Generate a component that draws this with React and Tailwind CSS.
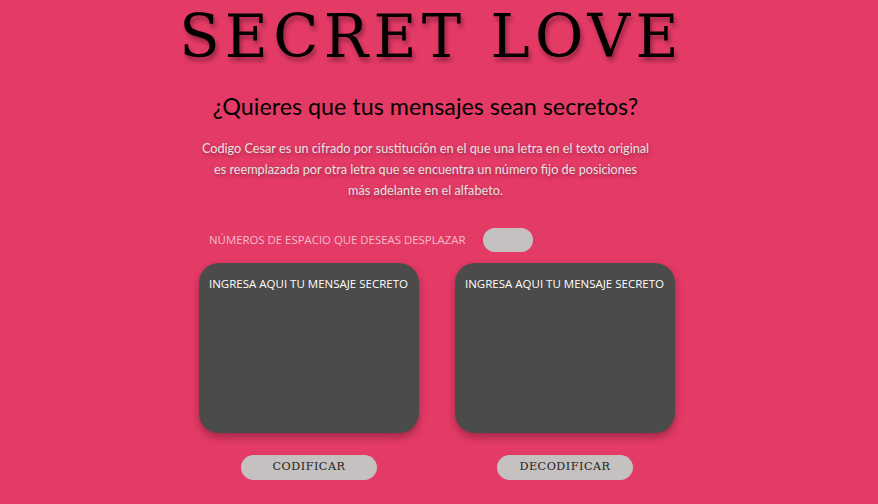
export default function App() {
    return (
        <div className="min-h-[504px] w-full bg-[#e43a66] overflow-hidden">
            <div className="flex flex-col items-center pr-[27px]">
                <h1 className="mt-[4px] text-[59px] leading-[66px] tracking-[5.3px] text-black [font-family:'DejaVu_Serif',serif] [text-shadow:2px_4px_4px_rgba(0,0,0,0.35)] pl-[12px]">
                    SECRET LOVE
                </h1>
                <h2 className="mt-[20px] text-[23.3px] leading-[32px] text-black [font-family:Lato,sans-serif]">
                    ¿Quieres que tus mensajes sean secretos?
                </h2>
                <p className="mt-[16px] text-center text-[12.7px] leading-[21px] text-[#e6e2e3] [font-family:Lato,sans-serif] [text-shadow:1px_2px_4px_rgba(0,0,0,0.35)]">
                    Codigo Cesar es un cifrado por sustitución en el que una letra en el texto original<br />
                    es reemplazada por otra letra que se encuentra un número fijo de posiciones<br />
                    más adelante en el alfabeto.
                </p>
            </div>
            <div className="ml-[199px] w-[476px]">
                <div className="mt-[27px] flex items-center pl-[10px] h-[24px]">
                    <span className="text-[11.4px] text-[#f3bccb] [font-family:'Open_Sans',sans-serif]">NÚMEROS DE ESPACIO QUE DESEAS DESPLAZAR</span>
                    <input type="number" className="ml-[17px] h-[24px] w-[50px] rounded-full bg-[#c4c1c0] outline-none border-0" />
                </div>
                <div className="mt-[11px] flex gap-[36px]">
                    {['CODIFICAR', 'DECODIFICAR'].map(label => (
                        <div key={label} className="flex flex-col items-center w-[220px]">
                            <textarea
                                placeholder="INGRESA AQUI TU MENSAJE SECRETO"
                                className="w-[220px] h-[170px] resize-none rounded-[20px] bg-[#4a4b4a] pl-[10px] pr-[4px] py-[12px] text-[11.5px] text-white placeholder:text-white outline-none shadow-[0_4px_8px_rgba(0,0,0,0.3)] [font-family:'Open_Sans',sans-serif]"
                            />
                            <button className="mt-[22px] h-[25px] w-[136px] rounded-full bg-[#c4c1c0] text-[11.2px] tracking-[0.5px] text-[#222] [font-family:'DejaVu_Serif',serif]">
                                {label}
                            </button>
                        </div>
                    ))}
                </div>
            </div>
        </div>
    );
}
